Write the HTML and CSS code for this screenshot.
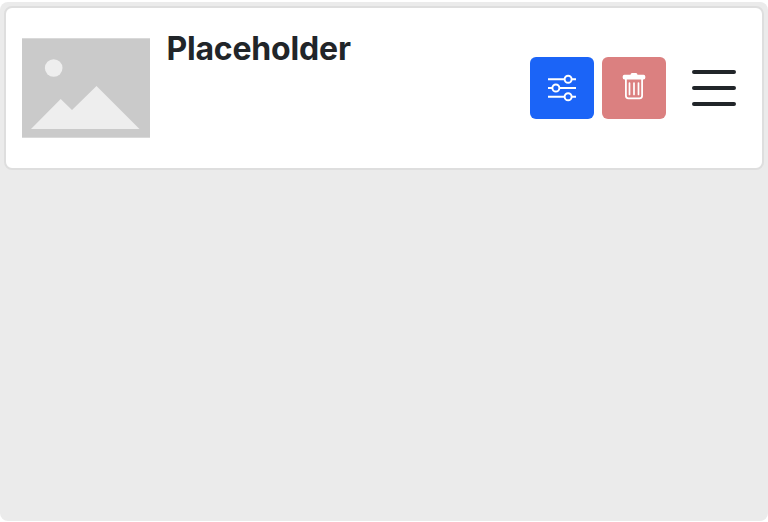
FILE: index.html
```html
<!DOCTYPE html>
<html lang="en">
<head>
<meta charset="utf-8">
<title>Placeholder</title>
<link rel="stylesheet" href="styles.css">
</head>
<body>
<main class="panel">
  <article class="card">
    <svg class="thumb" viewBox="0 0 128 100" aria-hidden="true">
      <rect width="128" height="100" fill="#cacaca"/>
      <path d="M0 .5H128M0 99.5H128" stroke="#d9d9d9"/>
      <circle cx="31.7" cy="30" r="8.8" fill="#eee"/>
      <path d="M9 91L38.700 61L50 72L74.500 48L117.500 91Z" fill="#eee"/>
    </svg>
    <h1 class="title">Placeholder</h1>
    <div class="actions">
      <button class="btn btn-primary" aria-label="Settings">
        <svg width="28" height="28" viewBox="0 0 16 16" fill="none" stroke="#fff" stroke-width="1.100">
          <path d="M0 3H9.500M13.500 3H16M0 8H2.500M6.500 8H16M0 13H9.500M13.500 13H16"/>
          <circle cx="11.500" cy="3" r="2"/><circle cx="4.500" cy="8" r="2"/><circle cx="11.500" cy="13" r="2"/>
        </svg>
      </button>
      <button class="btn btn-danger" aria-label="Delete">
        <svg width="28" height="28" viewBox="0 0 28 28" fill="none" stroke="#fff">
          <path d="M4.400 .800H10.500Q10.700 -1 12 -1H16Q17.300 -1 17.500 .800H23.600Q25.300 .800 25.300 2.500V3.700Q25.300 5.400 23.600 5.400H4.400Q2.700 5.400 2.700 3.700V2.500Q2.700 .800 4.400 .800Z" fill="#fff" stroke="none"/>
          <path d="M5.900 5V21.800Q5.900 24.300 8.400 24.300H19.600Q22.100 24.300 22.100 21.800V5" stroke-width="1.800"/>
          <path d="M9.500 9V20.500M14 9V20.500M18.500 9V20.500" stroke-width="1.700" stroke-linecap="round"/>
        </svg>
      </button>
      <svg class="handle" width="64" height="64" viewBox="0 0 16 16" fill="none" stroke="#212529" stroke-linecap="round" aria-hidden="true">
        <path d="M3 4H13M3 8H13M3 12H13"/>
      </svg>
    </div>
  </article>
</main>
</body>
</html>
```
FILE: styles.css
```css
* { box-sizing: border-box; }
body { margin: 0; background: #fff; color: #212529; font-family: Inter, "Liberation Sans", sans-serif; }
.panel { height: 519px; margin-top: 2px; padding: 4px; background: #ebebeb; border-radius: 8px; }
.card { display: flex; align-items: center; height: 164px; padding: 0 16px; background: #fff; border: 2px solid #dedede; border-radius: 8px; }
.thumb { width: 128px; height: 100px; flex: none; }
.title { align-self: flex-start; margin: 22px 0 0 16.4px; font-size: 32px; line-height: 38px; font-weight: 700; letter-spacing: -.18px; }
.actions { display: flex; align-items: center; gap: 8px; margin-left: auto; }
.btn { display: flex; align-items: center; justify-content: center; width: 64px; height: 62px; padding: 0; border: 0; border-radius: 6px; }
.btn svg { overflow: visible; }
.btn-primary { background: #1b64f7; }
.btn-danger { background: #db8080; }
.handle { display: block; margin-left: 8px; }
```
